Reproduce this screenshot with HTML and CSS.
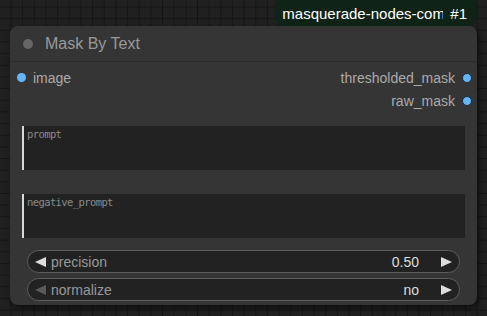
FILE: index.html
```html
<!DOCTYPE html>
<html lang="en">
<head>
    <meta charset="UTF-8">
    <meta name="viewport" content="width=device-width, initial-scale=1.0">
    <title>Mask By Text</title>
    <link rel="stylesheet" href="styles.css">
</head>
<body>
    <div class="canvas">
        <div class="badge-row">
            <div class="badge">
                <span class="badge-name">masquerade-nodes-com</span>
                <span class="badge-id">#1</span>
            </div>
        </div>

        <div class="node">
            <header class="node-title">
                <span class="title-dot"></span>
                <span class="title-text">Mask By Text</span>
            </header>

            <div class="slots">
                <div class="slot-row">
                    <div class="slot slot-in">
                        <span class="slot-dot"></span>
                        <span class="slot-label">image</span>
                    </div>
                    <div class="slot slot-out">
                        <span class="slot-label">thresholded_mask</span>
                        <span class="slot-dot"></span>
                    </div>
                </div>
                <div class="slot-row">
                    <div class="slot slot-in"></div>
                    <div class="slot slot-out">
                        <span class="slot-label">raw_mask</span>
                        <span class="slot-dot"></span>
                    </div>
                </div>
            </div>

            <textarea class="text-input first" placeholder="prompt"></textarea>
            <textarea class="text-input" placeholder="negative_prompt"></textarea>

            <div class="widgets">
                <div class="widget">
                    <svg class="arrow" width="11" height="10" viewBox="0 0 11 10"><polygon points="11,0 0,5 11,10"/></svg>
                    <span class="widget-label">precision</span>
                    <span class="widget-value">0.50</span>
                    <svg class="arrow" width="11" height="10" viewBox="0 0 11 10"><polygon points="0,0 11,5 0,10"/></svg>
                </div>
                <div class="widget">
                    <svg class="arrow arrow-off" width="11" height="10" viewBox="0 0 11 10"><polygon points="11,0 0,5 11,10"/></svg>
                    <span class="widget-label">normalize</span>
                    <span class="widget-value">no</span>
                    <svg class="arrow" width="11" height="10" viewBox="0 0 11 10"><polygon points="0,0 11,5 0,10"/></svg>
                </div>
            </div>
        </div>
    </div>
</body>
</html>
```

FILE: styles.css
```css
* {
    margin: 0;
    padding: 0;
    box-sizing: border-box;
}

body {
    width: 487px;
    height: 316px;
    overflow: hidden;
    font-family: "Liberation Sans", Arial, sans-serif;
    background-color: #202020;
    background-image:
        linear-gradient(to right, #151515 1px, transparent 1px),
        linear-gradient(to bottom, #151515 1px, transparent 1px);
    background-size: 11.67px 11.67px;
    background-position: 10.5px 6.5px;
}

.canvas {
    display: flex;
    flex-direction: column;
    padding: 0 10px;
}

.badge-row {
    display: flex;
    justify-content: flex-end;
    height: 26px;
}

.badge {
    display: flex;
    align-items: center;
    height: 32px;
    margin-top: -6px;
    padding: 6px 10px 0 7px;
    border-radius: 10px;
    background-color: #0f2417;
    color: #ffffff;
    font-size: 15px;
}

.badge-name {
    max-width: 161px;
    overflow: hidden;
    white-space: nowrap;
}

.badge-id {
    margin-left: 7px;
}

.node {
    width: 467px;
    height: 279px;
    border-radius: 8px;
    background-color: #353535;
    box-shadow: 2px 3px 6px rgba(0, 0, 0, 0.55);
}

.node-title {
    display: flex;
    align-items: center;
    height: 36px;
    padding-left: 13px;
    border-bottom: 1px solid #2b2b2b;
}

.title-dot {
    width: 10px;
    height: 10px;
    border-radius: 50%;
    background-color: #666666;
}

.title-text {
    margin-left: 12px;
    font-size: 16px;
    color: #999999;
}

.slots {
    padding: 4px 5px 0 7px;
}

.slot-row {
    display: flex;
    justify-content: space-between;
    height: 23px;
}

.slot {
    display: flex;
    align-items: center;
    gap: 7px;
}

.slot-dot {
    width: 9px;
    height: 9px;
    border-radius: 50%;
    background-color: #64b5f6;
}

.slot-out .slot-dot {
    width: 10px;
    height: 10px;
    border: 1px solid #1c2a36;
}

.slot-label {
    font-size: 14px;
    color: #aaaaaa;
}

.text-input {
    display: block;
    width: 443px;
    height: 44px;
    margin: 24px 0 0 12px;
    padding: 2px 3px;
    border: none;
    border-left: 2px solid #d8d8d8;
    outline: none;
    resize: none;
    background-color: #222222;
    color: #dddddd;
    font-family: "DejaVu Sans Mono", "Liberation Mono", monospace;
    font-size: 10.5px;
    letter-spacing: -0.6px;
}

.text-input.first {
    margin-top: 14px;
}

.text-input::placeholder {
    color: #8a8a8a;
}

.widgets {
    display: flex;
    flex-direction: column;
    gap: 5px;
    margin: 12px 0 0 17px;
}

.widget {
    display: flex;
    align-items: center;
    width: 433px;
    height: 23px;
    padding: 0 7px;
    border: 1px solid #5e5e5e;
    border-radius: 12px;
    background-color: #222222;
    font-size: 14px;
}

.arrow {
    fill: #dddddd;
}

.arrow-off {
    fill: #5a5a5a;
}

.widget-label {
    flex: 1;
    margin-left: 5px;
    color: #999999;
}

.widget-value {
    margin-right: 22px;
    color: #dddddd;
}
```
